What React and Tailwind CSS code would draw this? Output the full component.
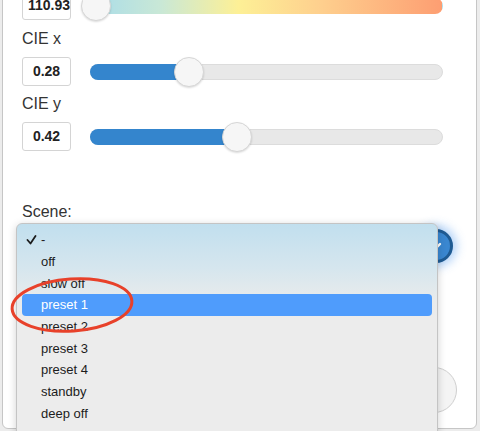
import React from 'react'

const SCENES = ['-', 'off', 'slow off', 'preset 1', 'preset 2', 'preset 3', 'preset 4', 'standby', 'deep off']

function ValueBox({ value, left = false }) {
    return (
        <div className={`w-[49px] h-[29px] shrink-0 overflow-hidden whitespace-nowrap rounded-[3px] border border-[#d4d4d4] bg-white text-[14px] font-bold leading-[27px] text-[#222] ${left ? 'pl-[5px]' : 'text-center'}`}>
            {value}
        </div>
    )
}

function Slider({ pct, gradient = false }) {
    return (
        <div className={`relative h-[16px] flex-1 rounded-full border ${gradient ? 'border-transparent bg-[linear-gradient(90deg,#a9dce9_0%,#c9e8d6_20%,#fdf096_42%,#fed08e_65%,#fd9e72_100%)]' : 'border-[#dcdcdc] bg-[#e8e8e8]'}`}>
            {!gradient && (
                <div className="absolute -left-px -top-px h-[16px] rounded-full bg-[#3485cd]" style={{ width: `calc(${pct}% + 2px)` }} />
            )}
            <div
                className="absolute top-[-8px] h-[30px] w-[30px] rounded-full border border-[#d6d6d6] bg-[#f6f6f6] shadow-[0_1px_2px_rgba(0,0,0,0.15)]"
                style={{ left: `calc(${pct}% - 15px)` }}
            />
        </div>
    )
}

export default function App() {
    return (
        <div className="relative h-[431px] w-[480px] overflow-hidden bg-[#ececec] font-['Liberation_Sans',Arial,sans-serif] text-[#333]">
            {/* panel */}
            <div className="-mt-[12px] ml-[2px] h-[441px] w-[475px] rounded-b-[6px] border border-[#c6c6c6] bg-white pl-[19px] pr-[33px] pt-[2px]">
                <div className="flex h-[29px] items-center gap-[19px]">
                    <ValueBox value="110.93" left />
                    <Slider pct={1.4} gradient />
                </div>
                <div className="mt-[9px] h-[20px] text-[16px] leading-[20px]">CIE x</div>
                <div className="mt-[8px] flex h-[29px] items-center gap-[19px]">
                    <ValueBox value="0.28" />
                    <Slider pct={28} />
                </div>
                <div className="mt-[8px] h-[20px] text-[16px] leading-[20px]">CIE y</div>
                <div className="mt-[8px] flex h-[29px] items-center gap-[19px]">
                    <ValueBox value="0.42" />
                    <Slider pct={41.6} />
                </div>

                <div className="mt-[51px] h-[20px] text-[16px] leading-[20px]">Scene:</div>
                <div className="mt-[7px] flex h-[34px] items-center">
                    <div className="h-[30px] flex-1 rounded-[4px] border border-[#ccc] bg-white" />
                    <div className="-mr-[10px] flex h-[34px] w-[34px] items-center justify-center rounded-full border-[3px] border-[#1f5b93] bg-[#3a87d0] shadow-[0_0_10px_4px_rgba(90,160,240,0.45)]">
                        <svg width="16" height="16" viewBox="0 0 16 16" fill="none" stroke="#fff" strokeWidth="2.4" strokeLinecap="round">
                            <path d="M4 6l4 4 4-4" />
                        </svg>
                    </div>
                </div>

                <div className="mt-[104px] flex justify-end">
                    <div className="-mr-[14px] h-[46px] w-[46px] rounded-full border border-[#cfcfcf] bg-[#f4f4f4]" />
                </div>
            </div>

            {/* open dropdown menu */}
            <div className="absolute left-[16px] top-[223px] h-[220px] w-[422px] rounded-t-[6px] border border-[#c4c4c4] bg-[linear-gradient(180deg,#c1dfee_0px,#d6e6ee_45px,#e8ebec_75px,#ececec_95px,#ececec_100%)] px-[5px] pt-[5px] text-[13px] text-[#1c1c1c] shadow-[0_2px_8px_rgba(0,0,0,0.18)]">
                {SCENES.map((s, i) => (
                    <div
                        key={s}
                        className={`relative flex h-[21.7px] items-center pl-[19px] leading-none ${i === 3 ? 'rounded-[4px] bg-[#4f9cfc] text-white' : ''}`}
                    >
                        {i === 0 && (
                            <svg className="absolute left-[4px] top-[6px]" width="11" height="10" viewBox="0 0 11 10" fill="none" stroke="#1c1c1c" strokeWidth="1.8" strokeLinecap="round" strokeLinejoin="round">
                                <path d="M1.5 5l3 3.5 5-7.5" />
                            </svg>
                        )}
                        {s}
                    </div>
                ))}
            </div>

            {/* red annotation */}
            <svg className="pointer-events-none absolute left-0 top-[270px]" width="150" height="70" viewBox="0 0 150 70">
                <ellipse cx="72" cy="35" rx="60" ry="26" fill="none" stroke="#e8412a" strokeWidth="3" transform="rotate(-4 72 35)" />
            </svg>
        </div>
    )
}
